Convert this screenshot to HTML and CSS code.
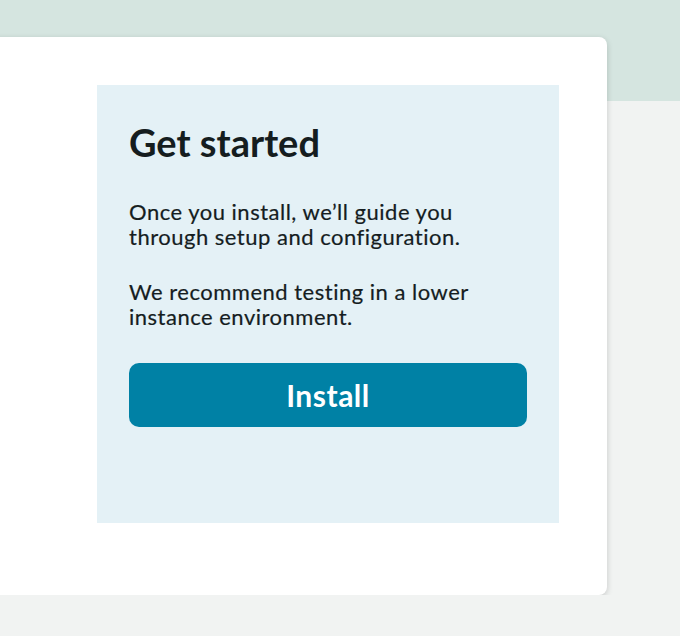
FILE: index.html
```html
<!DOCTYPE html>
<html lang="en">

<head>
  <meta charset="UTF-8">
  <title>Get started</title>
  <meta name="viewport" content="width=device-width, initial-scale=1">
  <link rel="stylesheet" href="styles.css">
</head>

<body>
  <div class="banner"></div>
  <main class="page">
    <div class="card">
      <section class="get-started">
        <h1>Get started</h1>
        <p>Once you install, we’ll guide you through setup and configuration.</p>
        <p>We recommend testing in a lower instance environment.</p>
        <button class="install-btn" type="button">Install</button>
      </section>
    </div>
  </main>
</body>

</html>
```

FILE: styles.css
```css
body {
  font-family: Lato, "Open Sans", sans-serif;
  margin: 0;
  padding: 0;
  background: #f1f3f2;
  color: #151d1f;
  overflow: hidden;
}

.banner {
  height: 101px;
  background: #d5e5e0;
}

.page {
  margin-top: -64px;
  margin-left: -20px;
}

.card {
  width: 627px;
  box-sizing: border-box;
  background: #fff;
  border-radius: 8px;
  box-shadow: 0 2px 6px rgba(0, 0, 0, 0.18);
  padding: 48px 48px 72px 117px;
}

.get-started {
  background: #e4f1f6;
  height: 438px;
  box-sizing: border-box;
  padding: 35px 32px 32px 32px;
}

.get-started h1 {
  font-size: 38px;
  font-weight: bold;
  line-height: 44px;
  margin: 0 0 35px 0;
}

.get-started p {
  font-size: 22px;
  line-height: 25px;
  letter-spacing: 0.5px;
  margin: 0 0 30px 0;
  -webkit-text-stroke: 0.2px #151d1f;
}

.install-btn {
  display: block;
  width: 100%;
  height: 64px;
  margin-top: 34px;
  background: #0081a5;
  color: #fff;
  border: none;
  border-radius: 10px;
  font-family: Lato, "Open Sans", sans-serif;
  font-size: 30px;
  font-weight: bold;
  letter-spacing: 0.5px;
  cursor: pointer;
}
```
